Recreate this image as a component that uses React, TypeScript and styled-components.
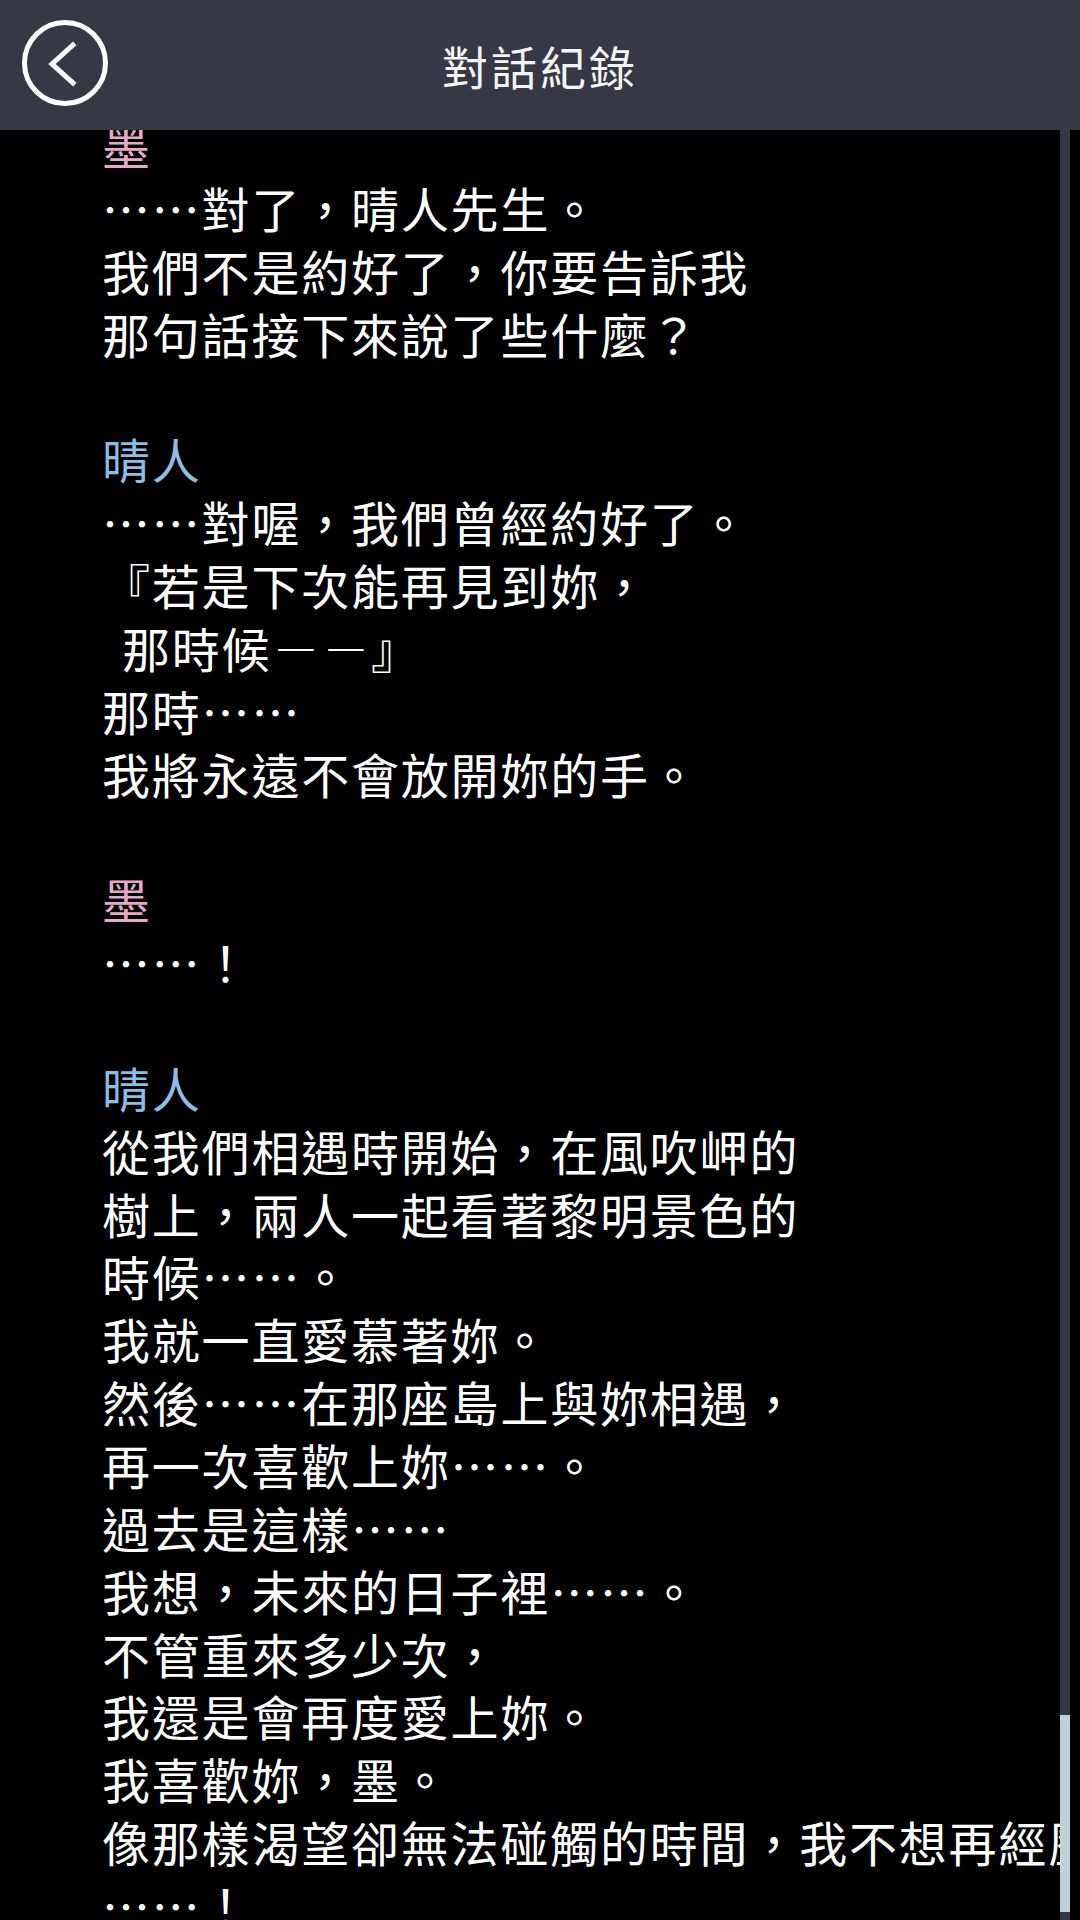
import React from "react";
import styled, { createGlobalStyle } from "styled-components";

const LINE = 62.86;

const Global = createGlobalStyle`
  html, body {
    margin: 0;
    padding: 0;
    background: #000;
  }
  body {
    font-family: "Noto Sans CJK TC", "Noto Sans CJK SC", "Noto Sans", sans-serif;
  }
`;

const Screen = styled.div`
  width: 1080px;
  height: 1920px;
  display: flex;
  flex-direction: column;
  background: #000;
  overflow: hidden;
`;

const Header = styled.header`
  height: 130px;
  flex: none;
  background: #363945;
  display: grid;
  grid-template-columns: 130px 1fr 130px;
  align-items: center;
`;

const BackButton = styled.button`
  width: 130px;
  height: 130px;
  border: 0;
  padding: 0;
  background: transparent;
  display: flex;
  align-items: center;
  justify-content: center;
  cursor: pointer;
`;

const Title = styled.h1`
  margin: 0;
  text-align: center;
  color: #f4f4f4;
  font-family: "Noto Sans CJK TC", sans-serif;
  font-weight: 400;
  font-size: 46px;
  letter-spacing: 3px;
  line-height: 130px;
`;

const Body = styled.div`
  flex: 1;
  display: flex;
  min-height: 0;
`;

const Log = styled.div`
  flex: 1;
  overflow: hidden;
  padding-left: 102px;
`;

const LogInner = styled.div`
  margin-top: -17px;
  display: flex;
  flex-direction: column;
  gap: ${LINE}px;
`;

const Entry = styled.section`
  display: flex;
  flex-direction: column;
`;

const Line = styled.div<{ $color?: string; $indent?: number }>`
  height: ${LINE}px;
  line-height: ${LINE}px;
  font-size: 48px;
  letter-spacing: 1.8px;
  color: ${(p) => p.$color ?? "#ffffff"};
  white-space: pre;
  padding-left: ${(p) => p.$indent ?? 0}px;
`;

const Dash = styled.span`
  display: inline-block;
  width: 49.8px;
  letter-spacing: 0;
  text-align: center;
  transform: scaleX(0.86);
`;

const Track = styled.div`
  width: 10px;
  margin-right: 10px;
  background: #363945;
  display: flex;
  flex-direction: column;
  justify-content: flex-end;
  padding-bottom: 8px;
  box-sizing: border-box;
`;

const Thumb = styled.div`
  height: 197px;
  background: #bfd2d8;
`;

const SPEAKERS: Record<string, string> = {
  墨: "#e6aac8",
  晴人: "#8cbde2",
};

type LineData = { text: React.ReactNode; indent?: number };

const ENTRIES: { who: string; lines: LineData[] }[] = [
  {
    who: "墨",
    lines: [
      { text: "……對了，晴人先生。" },
      { text: "我們不是約好了，你要告訴我" },
      { text: "那句話接下來說了些什麼？" },
    ],
  },
  {
    who: "晴人",
    lines: [
      { text: "……對喔，我們曾經約好了。" },
      { text: "『若是下次能再見到妳，" },
      {
        text: (
          <>
            那時候<Dash>―</Dash>
            <Dash>―</Dash>』
          </>
        ),
        indent: 20,
      },
      { text: "那時……" },
      { text: "我將永遠不會放開妳的手。" },
    ],
  },
  { who: "墨", lines: [{ text: "……！" }] },
  {
    who: "晴人",
    lines: [
      { text: "從我們相遇時開始，在風吹岬的" },
      { text: "樹上，兩人一起看著黎明景色的" },
      { text: "時候……。" },
      { text: "我就一直愛慕著妳。" },
      { text: "然後……在那座島上與妳相遇，" },
      { text: "再一次喜歡上妳……。" },
      { text: "過去是這樣……" },
      { text: "我想，未來的日子裡……。" },
      { text: "不管重來多少次，" },
      { text: "我還是會再度愛上妳。" },
      { text: "我喜歡妳，墨。" },
      { text: "像那樣渴望卻無法碰觸的時間，我不想再經歷" },
      { text: "……！" },
    ],
  },
];

const BackIcon = () => (
  <svg width="90" height="90" viewBox="0 0 90 90" fill="none">
    <circle cx="45" cy="43" r="40.5" stroke="#fff" strokeWidth="5" />
    <polyline
      points="53,25 32,44 53,63"
      stroke="#fff"
      strokeWidth="5"
      strokeLinecap="square"
      fill="none"
    />
  </svg>
);

export default function App() {
  return (
    <>
      <Global />
      <Screen>
        <Header>
          <BackButton aria-label="返回">
            <BackIcon />
          </BackButton>
          <Title>對話紀錄</Title>
          <div />
        </Header>
        <Body>
          <Log>
            <LogInner>
              {ENTRIES.map((e, i) => (
                <Entry key={i}>
                  <Line $color={SPEAKERS[e.who]}>{e.who}</Line>
                  {e.lines.map((l, j) => (
                    <Line key={j} $indent={l.indent}>
                      {l.text}
                    </Line>
                  ))}
                </Entry>
              ))}
            </LogInner>
          </Log>
          <Track>
            <Thumb />
          </Track>
        </Body>
      </Screen>
    </>
  );
}
